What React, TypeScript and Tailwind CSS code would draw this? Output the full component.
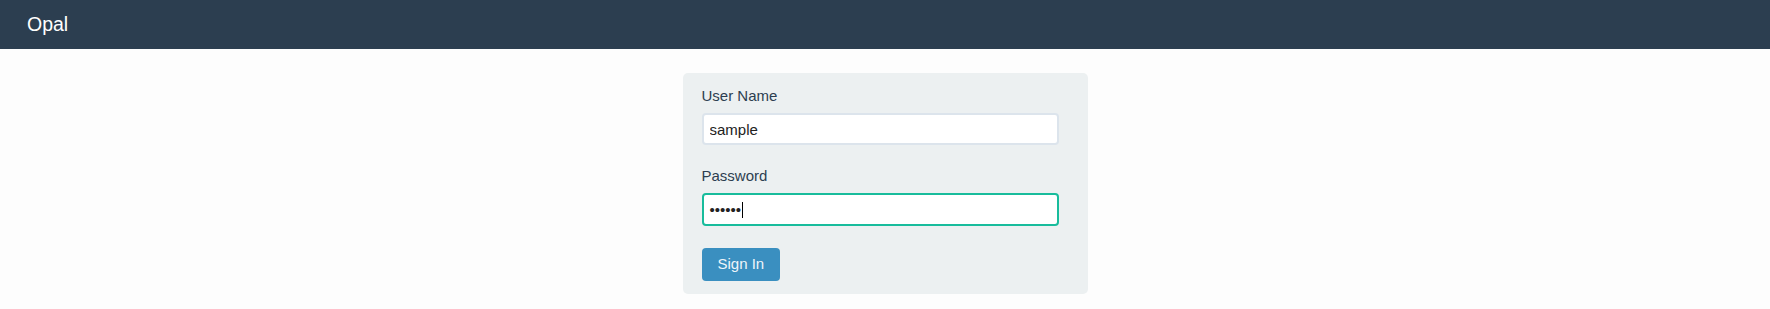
export default function App() {
  return (
    <div className="min-h-[309px] bg-[#fdfdfd] font-['Liberation_Sans',Arial,sans-serif]">
      {/* Top bar */}
      <nav className="flex h-[49px] items-center bg-[#2c3e50] px-[27px]">
        <span className="text-[19.5px] leading-none text-white">Opal</span>
      </nav>

      {/* Login card */}
      <div className="flex justify-center pt-[24px]">
        <form className="flex w-[405px] flex-col rounded-[5px] bg-[#ecf0f1] pb-[13px] pl-[19px] pr-[29px] pt-[12px]">
          <label className="text-[15px] leading-[21px] text-[#2c3e50]">User Name</label>
          <input
            readOnly
            value="sample"
            className="mt-[7px] h-[32px] w-full rounded-[4px] border-2 border-[#dce4ec] bg-white px-[6px] text-[15px] text-[#222] outline-none"
          />

          <label className="mt-[20px] text-[15px] leading-[21px] text-[#2c3e50]">Password</label>
          <div className="mt-[7px] flex h-[33px] w-full items-center rounded-[4px] border-2 border-[#18bc9c] bg-white px-[6px] text-[15px] text-[#222]">
            <span className="leading-none">••••••</span>
            <span className="ml-px h-[16px] w-px bg-black" />
          </div>

          <div className="mt-[22px]">
            <button
              type="button"
              className="h-[33px] rounded-[4px] bg-[#3a8fc0] px-[16px] text-[15px] text-[#eef5fa]"
            >
              Sign In
            </button>
          </div>
        </form>
      </div>
    </div>
  );
}
